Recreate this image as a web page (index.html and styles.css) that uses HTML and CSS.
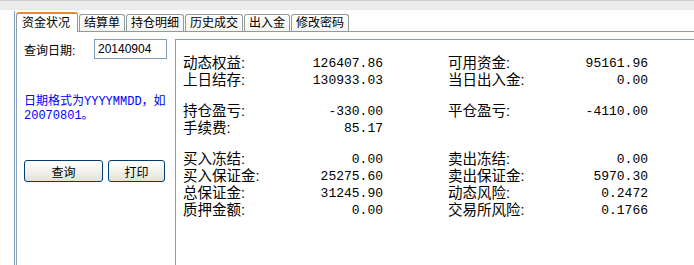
FILE: index.html
```html
<!DOCTYPE html>
<html lang="zh-CN">
  <head>
    <meta charset="UTF-8" />
    <title>资金状况</title>
    <link rel="stylesheet" href="styles.css">
  </head>
  <body>
    <div class="topbar"></div>
    <div class="frame">
      <div class="tabs">
        <div class="tab active">资金状况</div>
        <div class="tab">结算单</div>
        <div class="tab">持仓明细</div>
        <div class="tab">历史成交</div>
        <div class="tab">出入金</div>
        <div class="tab">修改密码</div>
      </div>
      <div class="page">
        <div class="side">
          <div class="query-row">
            <span class="query-label">查询日期:</span>
            <div class="date-input">20140904</div>
          </div>
          <p class="hint">日期格式为YYYYMMDD，如<br>20070801。</p>
          <div class="buttons">
            <button class="btn btn-query">查询</button>
            <button class="btn btn-print">打印</button>
          </div>
        </div>
        <div class="main">
          <div class="group">
            <div class="row">
              <div class="cell"><span class="label">动态权益:</span><span class="value">126407.86</span></div>
              <div class="cell"><span class="label">可用资金:</span><span class="value">95161.96</span></div>
            </div>
            <div class="row">
              <div class="cell"><span class="label">上日结存:</span><span class="value">130933.03</span></div>
              <div class="cell"><span class="label">当日出入金:</span><span class="value">0.00</span></div>
            </div>
          </div>
          <div class="group">
            <div class="row">
              <div class="cell"><span class="label">持仓盈亏:</span><span class="value">-330.00</span></div>
              <div class="cell"><span class="label">平仓盈亏:</span><span class="value">-4110.00</span></div>
            </div>
            <div class="row">
              <div class="cell"><span class="label">手续费:</span><span class="value">85.17</span></div>
              <div class="cell"></div>
            </div>
          </div>
          <div class="group">
            <div class="row">
              <div class="cell"><span class="label">买入冻结:</span><span class="value">0.00</span></div>
              <div class="cell"><span class="label">卖出冻结:</span><span class="value">0.00</span></div>
            </div>
            <div class="row">
              <div class="cell"><span class="label">买入保证金:</span><span class="value">25275.60</span></div>
              <div class="cell"><span class="label">卖出保证金:</span><span class="value">5970.30</span></div>
            </div>
            <div class="row">
              <div class="cell"><span class="label">总保证金:</span><span class="value">31245.90</span></div>
              <div class="cell"><span class="label">动态风险:</span><span class="value">0.2472</span></div>
            </div>
            <div class="row">
              <div class="cell"><span class="label">质押金额:</span><span class="value">0.00</span></div>
              <div class="cell"><span class="label">交易所风险:</span><span class="value">0.1766</span></div>
            </div>
          </div>
        </div>
      </div>
    </div>
  </body>
</html>
```

FILE: styles.css
```css
html,
body {
  height: 100%;
}
body {
  margin: 0;
  display: flex;
  flex-direction: column;
  background-color: #ffffff;
  color: #000000;
  font-family: "Liberation Sans", "Noto Sans CJK SC", sans-serif;
  font-size: 12px;
  overflow: hidden;
}
.topbar {
  height: 10px;
  flex: none;
  background-color: #ebebeb;
  border-top: 1px solid #d6cfcf;
  box-sizing: border-box;
}
.frame {
  flex: 1;
  display: flex;
  flex-direction: column;
  margin-left: 14px;
  margin-top: 1px;
  border-left: 1px solid #7f9db9;
  padding-left: 1px;
}
.tabs {
  display: flex;
  align-items: flex-end;
  gap: 1px;
  height: 19px;
  margin-top: 1px;
  border-bottom: 1px solid #919b9c;
}
.tab {
  height: 16px;
  line-height: 16px;
  padding: 0 4px;
  border: 1px solid #919b9c;
  border-bottom: none;
  border-radius: 3px 3px 0 0;
  background: linear-gradient(#ffffff, #f3f3ef);
  font-size: 12px;
  white-space: nowrap;
}
.tab.active {
  height: 18px;
  line-height: 19px;
  padding: 0 7px 0 5px;
  margin-bottom: -1px;
  border-top: 2px solid #e68b2c;
  background: #ffffff;
  font-size: 12px;
}
.page {
  flex: 1;
  display: flex;
  padding-top: 7px;
  border-left: 1px solid #8ca0b4;
}
.side {
  width: 151px;
  padding-left: 7px;
  flex: none;
}
.query-row {
  display: flex;
  align-items: center;
  height: 20px;
}
.query-label {
  width: 70px;
}
.date-input {
  width: 68px;
  height: 18px;
  line-height: 18px;
  padding-left: 3px;
  border: 1px solid #7f9db9;
  font-size: 12px;
}
.hint {
  margin: 36px 0 0;
  color: #0000ff;
  line-height: 14px;
  font-family: "Liberation Mono", "Noto Sans CJK SC", monospace;
  font-size: 12px;
  white-space: nowrap;
}
.buttons {
  display: flex;
  gap: 5px;
  margin-top: 37px;
}
.btn {
  height: 22px;
  padding: 0;
  border: 1px solid #003c74;
  border-radius: 3px;
  background: linear-gradient(#ffffff, #f0efe6 60%, #e3e1d6);
  font-family: "Liberation Sans", "Noto Sans CJK SC", sans-serif;
  font-size: 12px;
  color: #000000;
}
.btn-query {
  width: 79px;
}
.btn-print {
  width: 57px;
}
.main {
  flex: 1;
  border-left: 1px solid #7f9db9;
  border-top: 1px solid #7f9db9;
  padding: 15px 0 0 7px;
}
.group + .group {
  margin-top: 14px;
}
.row {
  display: flex;
  gap: 65px;
  height: 17px;
  line-height: 17px;
}
.cell {
  width: 200px;
  display: flex;
  justify-content: space-between;
}
.label {
  font-size: 14.5px;
}
.value {
  font-family: "Liberation Mono", monospace;
  font-size: 13px;
}
```
